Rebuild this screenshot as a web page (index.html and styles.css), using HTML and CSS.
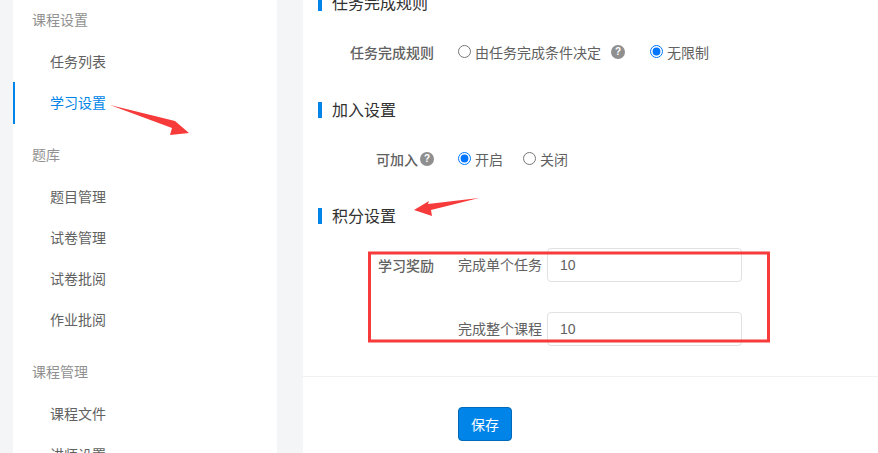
FILE: index.html
```html
<!DOCTYPE html>
<html lang="en">
<head>
    <meta charset="UTF-8">
    <title>学习设置</title>
    <link rel="stylesheet" href="styles.css">
</head>
<body>
    <div class="page">
        <div class="sidebar">
            <div class="nav-group">
                <div class="nav-title">课程设置</div>
                <a class="nav-item">任务列表</a>
                <a class="nav-item active">学习设置</a>
            </div>
            <div class="nav-group">
                <div class="nav-title">题库</div>
                <a class="nav-item">题目管理</a>
                <a class="nav-item">试卷管理</a>
                <a class="nav-item">试卷批阅</a>
                <a class="nav-item">作业批阅</a>
            </div>
            <div class="nav-group">
                <div class="nav-title">课程管理</div>
                <a class="nav-item">课程文件</a>
                <a class="nav-item">讲师设置</a>
            </div>
        </div>

        <div class="main">
            <h3 class="section-title">任务完成规则</h3>
            <div class="form-row section-end">
                <div class="form-label">任务完成规则</div>
                <div class="options">
                    <label class="radio"><input type="radio" name="rule">由任务完成条件决定</label>
                    <span class="help help-rule">?</span>
                    <label class="radio"><input type="radio" name="rule" checked>无限制</label>
                </div>
            </div>

            <h3 class="section-title">加入设置</h3>
            <div class="form-row section-end section-end-short">
                <div class="form-label">可加入<span class="help">?</span></div>
                <div class="options">
                    <label class="radio radio-short"><input type="radio" name="join" checked>开启</label>
                    <label class="radio"><input type="radio" name="join">关闭</label>
                </div>
            </div>

            <h3 class="section-title">积分设置</h3>
            <div class="form-row">
                <div class="form-label reward-label">学习奖励</div>
                <div class="reward-fields">
                    <div class="reward-field">
                        <span>完成单个任务</span>
                        <input type="text" value="10">
                    </div>
                    <div class="reward-field">
                        <span>完成整个课程</span>
                        <input type="text" value="10">
                    </div>
                </div>
            </div>

            <div class="form-actions">
                <button>保存</button>
            </div>
        </div>
    </div>

    <!-- red marks drawn over the screenshot -->
    <svg class="marks" width="878" height="453" viewBox="0 0 878 453">
        <path d="M110 105 L175 121 L189 133 L170 135 L172 128 Z" fill="#f73a3a"/>
        <path d="M414 210 L429 201 L428 204 L479 198 L431 210 L432 216 Z" fill="#f73a3a"/>
        <rect x="369.5" y="253" width="399" height="88" fill="none" stroke="#f73a3a" stroke-width="3"/>
    </svg>
</body>
</html>
```

FILE: styles.css
```css
html, body {
    margin: 0;
    height: 453px;
    overflow: hidden;
}
body {
    background-color: #f3f5f7;
    font-family: "Liberation Sans", "Noto Sans CJK SC", sans-serif;
    font-size: 14px;
    color: #616161;
}
.page {
    display: flex;
    gap: 26px;
    padding-left: 13px;
    height: 453px;
    overflow: hidden;
}
.sidebar {
    width: 264px;
    flex: none;
    background-color: #fff;
    margin-top: -1px;
}
.nav-group {
    margin-bottom: 10px;
}
.nav-title {
    height: 42px;
    line-height: 42px;
    margin-bottom: 1px;
    padding-left: 19px;
    color: #919191;
}
.nav-item {
    display: block;
    height: 41px;
    line-height: 41px;
    padding-left: 37px;
}
.nav-item.active {
    height: 42px;
    line-height: 42px;
    margin-top: -1px;
    padding-left: 35px;
    border-left: 2px solid #0084e8;
    color: #0084e8;
}
.main {
    flex: 1;
    background-color: #fff;
    margin-top: -5px;
    height: 458px;
}
.section-title {
    margin: 0 0 24px 15px;
    padding-left: 10px;
    height: 16px;
    line-height: 18px;
    font-size: 16px;
    font-weight: normal;
    color: #313131;
    border-left: 4px solid #0084e8;
}
.form-row {
    display: grid;
    grid-template-columns: 131px 1fr;
    column-gap: 24px;
}
.section-end {
    height: 33px;
    align-items: center;
    margin-bottom: 34px;
}
.section-end-short {
    margin-bottom: 33px;
}
.form-label {
    display: flex;
    justify-content: flex-end;
    align-items: center;
    gap: 2px;
    font-weight: 500;
}
.reward-label {
    align-items: flex-start;
    padding-top: 8px;
    line-height: 20px;
}
.options {
    display: flex;
    align-items: center;
}
.radio {
    display: flex;
    align-items: center;
    gap: 4px;
}
.radio input {
    margin: 0;
}
.radio-short {
    margin-right: 20px;
}
.help {
    display: inline-block;
    width: 14px;
    height: 14px;
    line-height: 14px;
    border-radius: 50%;
    background-color: #8f8f8f;
    color: #fff;
    font-size: 10px;
    font-weight: bold;
    text-align: center;
}
.help-rule {
    margin: 0 25px 0 10px;
}
.reward-fields {
    display: flex;
    flex-direction: column;
    gap: 30px;
}
.reward-field {
    display: flex;
    align-items: center;
    gap: 5px;
}
.reward-field span {
    margin-top: -2px;
}
.reward-field input {
    width: 195px;
    height: 34px;
    box-sizing: border-box;
    padding: 2px 12px;
    border: 1px solid #e1e1e1;
    border-radius: 4px;
    font-family: inherit;
    font-size: 14px;
    color: #616161;
}
.form-actions {
    margin-top: 30px;
    padding: 30px 0 0 155px;
    border-top: 1px solid #f1f1f1;
}
button {
    width: 54px;
    height: 34px;
    background-color: #0084e8;
    color: #fff;
    border: 1px solid #0069ba;
    border-radius: 4px;
    font-family: inherit;
    font-size: 14px;
    padding: 0;
}
.marks {
    position: absolute;
    left: 0;
    top: 0;
}
```
